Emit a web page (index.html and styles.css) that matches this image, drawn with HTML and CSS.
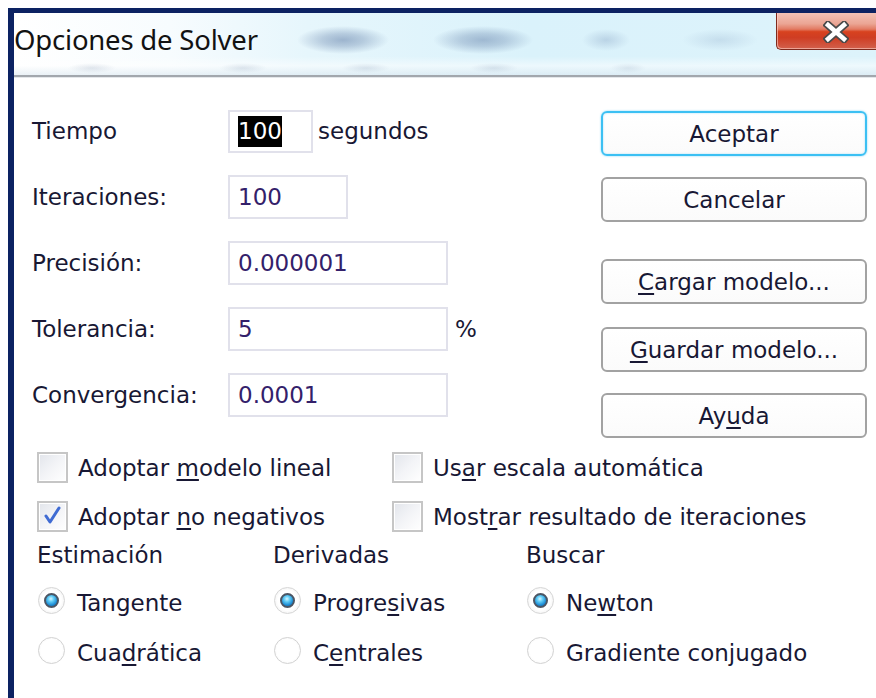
FILE: index.html
```html
<!DOCTYPE html>
<html lang="es">
<head>
<meta charset="utf-8">
<title>Opciones de Solver</title>
<link rel="stylesheet" href="styles.css">
</head>
<body>
<div class="window">
  <div class="titlebar">
    <h1 class="title">Opciones de Solver</h1>
    <div class="close" aria-label="Cerrar">
      <svg width="26" height="22" viewBox="0 0 26 22" aria-hidden="true">
        <path d="M5 4 L21 18 M21 4 L5 18" stroke="#4a4a4a" stroke-width="8" stroke-linecap="square" fill="none"/>
        <path d="M5 4 L21 18 M21 4 L5 18" stroke="#ffffff" stroke-width="4.5" stroke-linecap="square" fill="none"/>
      </svg>
    </div>
  </div>

  <div class="content">
    <div class="top">
      <div class="fields">
        <span class="lbl">Tiempo</span>
        <div class="ctl"><span class="box w85"><span class="sel">100</span></span><span class="unit">segundos</span></div>

        <span class="lbl">Iteraciones:</span>
        <div class="ctl"><span class="box w120">100</span></div>

        <span class="lbl">Precisión:</span>
        <div class="ctl"><span class="box w220">0.000001</span></div>

        <span class="lbl">Tolerancia:</span>
        <div class="ctl"><span class="box w220">5</span><span class="pct">%</span></div>

        <span class="lbl">Convergencia:</span>
        <div class="ctl"><span class="box w220">0.0001</span></div>
      </div>

      <div class="actions">
        <button class="btn default">Aceptar</button>
        <button class="btn">Cancelar</button>
        <button class="btn load"><u>C</u>argar modelo...</button>
        <button class="btn save"><u>G</u>uardar modelo...</button>
        <button class="btn">Ay<u>u</u>da</button>
      </div>
    </div>

    <div class="checks">
      <div class="check"><span class="cb"></span><span>Adoptar <u>m</u>odelo lineal</span></div>
      <div class="check"><span class="cb"></span><span>Us<u>a</u>r escala automática</span></div>
      <div class="check">
        <span class="cb">
          <svg width="27" height="27" viewBox="0 0 27 27" aria-hidden="true">
            <path d="M7 13 L11 19 L20 5" stroke="#3f6bd3" stroke-width="3" fill="none" stroke-linecap="round" stroke-linejoin="round"/>
          </svg>
        </span>
        <span>Adoptar <u>n</u>o negativos</span>
      </div>
      <div class="check"><span class="cb"></span><span>Most<u>r</u>ar resultado de iteraciones</span></div>
    </div>

    <div class="groups">
      <div class="group">
        <div class="ghead">Estimación</div>
        <div class="opt"><span class="rb on"></span><span class="t">Tangente</span></div>
        <div class="opt"><span class="rb"></span><span class="t">Cua<u>d</u>rática</span></div>
      </div>
      <div class="group">
        <div class="ghead">Derivadas</div>
        <div class="opt"><span class="rb on"></span><span class="t">Progre<u>s</u>ivas</span></div>
        <div class="opt"><span class="rb"></span><span class="t">C<u>e</u>ntrales</span></div>
      </div>
      <div class="group">
        <div class="ghead">Buscar</div>
        <div class="opt"><span class="rb on"></span><span class="t">Ne<u>w</u>ton</span></div>
        <div class="opt"><span class="rb"></span><span class="t">Gradiente conjugado</span></div>
      </div>
    </div>
  </div>
</div>
</body>
</html>
```

FILE: styles.css
```css
html, body {
  margin: 0;
  height: 100%;
  background: #ffffff;
  overflow: hidden;
}

body {
  font-family: "DejaVu Sans", "Verdana", sans-serif;
  font-size: 23px;
  color: #181834;
}

u {
  text-decoration-thickness: 2px;
  text-underline-offset: 3px;
}

/* dialog frame: dark navy edge on the top and left */
.window {
  margin: 8px 0 0 8px;
  height: calc(100% - 8px);
  box-sizing: border-box;
  border-left: 6px solid #0c2262;
  border-top: 5px solid #0c2262;
  background: #ffffff;
}

.titlebar {
  display: flex;
  align-items: flex-start;
  height: 62px;
  overflow: hidden;
  border-bottom: 2px solid #a2a7ad;
  box-shadow: 0 1px 0 #e4e7ea;
  background:
    radial-gradient(ellipse 46px 14px at 329px 27px, rgba(85, 115, 160, 0.5) 0%, rgba(85, 115, 160, 0.32) 45%, rgba(85, 115, 160, 0) 100%),
    radial-gradient(ellipse 50px 14px at 469px 27px, rgba(85, 115, 160, 0.46) 0%, rgba(85, 115, 160, 0.3) 45%, rgba(85, 115, 160, 0) 100%),
    radial-gradient(ellipse 24px 11px at 592px 27px, rgba(110, 140, 180, 0.3) 0%, rgba(110, 140, 180, 0) 100%),
    radial-gradient(ellipse 38px 11px at 706px 27px, rgba(125, 155, 190, 0.24) 0%, rgba(125, 155, 190, 0) 100%),
    radial-gradient(ellipse 24px 5px at 78px 55px, rgba(120, 140, 170, 0.2), rgba(120, 140, 170, 0)),
    radial-gradient(ellipse 24px 5px at 229px 55px, rgba(120, 140, 170, 0.2), rgba(120, 140, 170, 0)),
    radial-gradient(ellipse 24px 5px at 352px 55px, rgba(120, 140, 170, 0.2), rgba(120, 140, 170, 0)),
    radial-gradient(ellipse 24px 5px at 480px 55px, rgba(120, 140, 170, 0.2), rgba(120, 140, 170, 0)),
    radial-gradient(ellipse 18px 5px at 614px 55px, rgba(120, 140, 170, 0.16), rgba(120, 140, 170, 0)),
    linear-gradient(180deg, rgba(255, 255, 255, 0) 0%, rgba(255, 255, 255, 0) 70%, rgba(255, 255, 255, 0.5) 85%, rgba(220, 232, 240, 0.6) 100%),
    linear-gradient(90deg, #ffffff 0%, #f7fcfe 18%, #e6f6fc 34%, #daf2fb 60%, #ddf3fb 100%);
}

.title {
  margin: 0;
  padding-top: 8px;
  font-family: "Noto Sans", "Open Sans", sans-serif;
  font-weight: 400;
  font-size: 27.5px;
  color: #121212;
  letter-spacing: -0.2px;
}

.close {
  margin-left: auto;
  width: 100px;
  height: 37px;
  box-sizing: border-box;
  display: flex;
  align-items: center;
  padding-left: 46px;
  padding-top: 1px;
  border-left: 1px solid #7e2a1d;
  border-bottom: 1px solid #7e2a1d;
  border-bottom-left-radius: 5px;
  box-shadow: inset 1px -1px 0 rgba(255, 210, 200, 0.6);
  background: linear-gradient(180deg, #f3c2b6 0%, #eba594 30%, #e27a62 45%, #d8421f 52%, #cf3d23 68%, #d2604c 100%);
}

.close svg {
  display: block;
}

/* dialog body */
.content {
  display: flex;
  flex-direction: column;
}

.top {
  display: flex;
  align-items: flex-start;
  padding: 32px 9px 0 18px;
}

.fields {
  display: grid;
  grid-template-columns: 196px auto;
  grid-auto-rows: 44px;
  row-gap: 22px;
  align-items: center;
}

.lbl {
  white-space: nowrap;
}

.ctl {
  display: flex;
  align-items: center;
}

.box {
  display: inline-flex;
  align-items: center;
  height: 44px;
  box-sizing: border-box;
  padding-left: 8px;
  border: 2px solid #e1e1eb;
  color: #33206a;
  background: #ffffff;
}

.w85 { width: 85px; height: 43px; }
.w120 { width: 120px; }
.w220 { width: 220px; }

.sel {
  display: inline-block;
  line-height: 31px;
  background: #000000;
  color: #ffffff;
}

.unit { margin-left: 5px; }
.pct { margin-left: 7px; }

.actions {
  margin-left: auto;
  padding-top: 2px;
  display: flex;
  flex-direction: column;
  gap: 21px;
}

.btn {
  width: 266px;
  height: 45px;
  box-sizing: border-box;
  padding: 0;
  font: inherit;
  color: #181834;
  border: 2px solid #a2a2a2;
  border-radius: 6px;
  background: linear-gradient(180deg, #ffffff 0%, #fbfbfb 100%);
}

.btn.default {
  border-color: #3cc0f3;
  box-shadow: 0 0 2px rgba(80, 200, 245, 0.8), inset 0 0 2px rgba(150, 220, 250, 0.9);
}

.btn.load { margin-top: 16px; }
.btn.save { margin-top: 2px; }

/* check boxes */
.checks {
  margin-top: 14px;
  padding-left: 23px;
  display: grid;
  grid-template-columns: 355px auto;
  grid-auto-rows: 31px;
  row-gap: 18px;
}

.check {
  display: flex;
  align-items: center;
  gap: 10px;
  white-space: nowrap;
}

.cb {
  flex: none;
  width: 31px;
  height: 31px;
  box-sizing: border-box;
  display: grid;
  place-items: center;
  border: 2px solid #c6c6c6;
  box-shadow: inset 0 0 0 1px #ffffff;
  background: linear-gradient(135deg, #e2e5eb 0%, #f3f4f7 50%, #ffffff 100%);
}

.cb svg {
  display: block;
}

/* option groups */
.groups {
  margin-top: 10px;
  padding-left: 23px;
  display: grid;
  grid-template-columns: 236px 253px auto;
}

.ghead {
  line-height: 27px;
}

.opt {
  display: flex;
  align-items: center;
  height: 30px;
  margin-top: 16px;
  white-space: nowrap;
}

.opt + .opt {
  margin-top: 20px;
}

.opt .t {
  margin-left: 12px;
  padding-top: 5px;
}

.rb {
  flex: none;
  width: 27px;
  height: 27px;
  margin-left: 1px;
  box-sizing: border-box;
  border-radius: 50%;
  display: grid;
  place-items: center;
  border: 1px solid #d2d2d2;
  background: radial-gradient(circle at 50% 50%, #ffffff 0%, #ffffff 60%, #efefef 100%);
}

.rb.on {
  border-color: #d6d6d6;
  background: radial-gradient(circle at 50% 50%, #ffffff 0%, #ffffff 55%, #e6e6e6 100%);
}

.rb.on::after {
  content: "";
  width: 15px;
  height: 15px;
  box-sizing: border-box;
  border-radius: 50%;
  border: 2px solid #4c5664;
  background: radial-gradient(circle at 45% 35%, #d8f6ff 0%, #62cdf6 30%, #1f8fd6 65%, #0b4f95 100%);
}
```
